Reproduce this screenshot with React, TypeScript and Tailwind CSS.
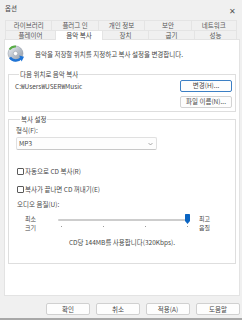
import React from "react";

// 옵션 > 음악 복사 탭

const row1 = ["라이브러리", "플러그 인", "개인 정보", "보안", "네트워크"];
const row2 = [
  { label: "플레이어", w: "w-[50px]" },
  { label: "음악 복사", w: "w-[47px]", active: true },
  { label: "장치", w: "w-[46px]" },
  { label: "굽기", w: "w-[46px]" },
  { label: "성능", w: "w-[43px]" },
];

function RipIcon() {
  return (
    <svg width="18" height="18" viewBox="0 0 18 18">
      <defs>
        <linearGradient id="disc" x1="0" y1="0" x2="1" y2="1">
          <stop offset="0" stopColor="#eef1f5" />
          <stop offset="0.5" stopColor="#b9c1cb" />
          <stop offset="1" stopColor="#8e98a4" />
        </linearGradient>
      </defs>
      <circle cx="8.5" cy="8.5" r="7.5" fill="url(#disc)" stroke="#8a939e" strokeWidth="0.5" />
      <circle cx="8.5" cy="8.5" r="2.2" fill="#fff" stroke="#8a939e" strokeWidth="0.5" />
      <path d="M2.5 4.5 A7 7 0 0 1 9 1.6" fill="none" stroke="#58ad46" strokeWidth="2" />
      <path d="M3 12.5 A7 7 0 0 0 14.2 13" fill="none" stroke="#1f74d6" strokeWidth="2.4" />
      <path d="M12.2 10.6 L17 11.8 L14.6 16.4 Z" fill="#1f74d6" />
    </svg>
  );
}

function Button({ label, primary }: { label: string; primary?: boolean }) {
  return (
    <div
      className={`w-[52px] h-[12px] flex items-center justify-center rounded-[2px] bg-[#fdfdfd] border ${
        primary ? "border-[#3c7fc4]" : "border-[#d3d3d3]"
      }`}
    >
      {label}
    </div>
  );
}

function Check({ label }: { label: string }) {
  return (
    <div className="flex items-center gap-[1px] h-[8px]">
      <div className="w-[7px] h-[7px] border border-[#5a5a5a] rounded-[1px] bg-white" />
      <span>{label}</span>
    </div>
  );
}

export default function App() {
  return (
    <div className="w-[242px] h-[320px] bg-[#f0f0f0] text-[#474747] text-[6.5px] leading-[7px] font-['Noto_Sans_CJK_KR',sans-serif] flex flex-col overflow-hidden border-b-2 border-[#a8a8a8]">
      {/* 제목 표시줄 */}
      <div className="h-[18px] flex items-start justify-between pl-[5px] pr-[6px]">
        <span className="mt-[5px]">옵션</span>
        <span className="mt-[7px] text-[8px] text-[#555]">✕</span>
      </div>

      {/* 탭 */}
      <div className="ml-[5px] w-[232px] mt-[2px] text-[#555]">
        <div className="grid grid-cols-5 h-[10px]">
          {row1.map((t) => (
            <div key={t} className="flex items-center justify-center border-t border-l last:border-r border-[#e4e4e4]">
              {t}
            </div>
          ))}
        </div>
        <div className="flex h-[9px]">
          {row2.map((t) => (
            <div
              key={t.label}
              className={`${t.w} flex items-center justify-center border-t border-l last:border-r border-[#e4e4e4] ${
                t.active ? "bg-white h-[10px] relative z-10 text-[#3a3a3a]" : ""
              }`}
            >
              {t.label}
            </div>
          ))}
        </div>
      </div>

      {/* 탭 내용 */}
      <div className="ml-[4px] w-[236px] h-[257px] bg-white border border-[#e3e3e3] flex flex-col">
        <div className="flex items-center gap-[10px] pl-[2px] mt-[5px] h-[18px]">
          <RipIcon />
          <span>음악을 저장할 위치를 지정하고 복사 설정을 변경합니다.</span>
        </div>

        <fieldset className="mx-[3px] mt-[8px] h-[41px] border border-[#dedede] pl-[6px] pr-[3px]">
          <legend className="ml-[4px] px-[1px] leading-[7px]">다음 위치로 음악 복사</legend>
          <div className="flex justify-between pt-[1.5px]">
            <span className="mt-[3px]">C:₩Users₩USER₩Music</span>
            <div className="flex flex-col gap-[4px]">
              <Button label="변경(H)..." primary />
              <Button label="파일 이름(N)..." />
            </div>
          </div>
        </fieldset>

        <fieldset className="mx-[3px] mt-[3.5px] h-[148.5px] border border-[#dedede] pl-[7px] pr-[3px]">
          <legend className="ml-[4px] px-[1px] leading-[7px]">복사 설정</legend>
          <div className="flex flex-col">
            <span className="mt-[4px]">형식(F):</span>
            <div className="mt-[3.5px] w-[141px] h-[13px] border border-[#e0e0e0] border-b-[#c8c8c8] rounded-[2px] bg-[#fdfdfd] flex items-center justify-between pl-[2px] pr-[3px]">
              <span>MP3</span>
              <svg width="5" height="4" viewBox="0 0 5 4">
                <path d="M0.5 1 L2.5 3 L4.5 1" fill="none" stroke="#777" strokeWidth="0.6" />
              </svg>
            </div>
            <div className="mt-[17px] ml-[1px]">
              <Check label="자동으로 CD 복사(R)" />
            </div>
            <div className="mt-[10px] ml-[1px]">
              <Check label="복사가 끝나면 CD 꺼내기(E)" />
            </div>
            <span className="mt-[7.5px] ml-[1px]">오디오 음질(U):</span>

            <div className="mt-[6px] flex items-start">
              <div className="ml-[9px] w-[33px] flex flex-col text-[6px] leading-[9px]">
                <span>최소</span>
                <span>크기</span>
              </div>
              <div className="relative w-[132px] h-[14px]">
                <div className="mt-[5px] h-[2px] w-[130px] bg-[#cdcdcd] rounded-full" />
                <div className="mt-[5.5px] flex justify-between pl-[3px] pr-[2px]">
                  <div className="w-[1px] h-[1px] bg-[#9a9a9a]" />
                  <div className="w-[1px] h-[1px] bg-[#9a9a9a]" />
                  <div className="w-[1px] h-[1px] bg-[#9a9a9a]" />
                  <div className="w-[1px] h-[1px] bg-[#9a9a9a]" />
                </div>
                <svg className="absolute left-[127px] top-[0.5px]" width="5" height="10" viewBox="0 0 5 10">
                  <path d="M0.6 0 H4.4 Q5 0 5 0.6 V7 L2.5 10 L0 7 V0.6 Q0 0 0.6 0 Z" fill="#0a64c2" />
                </svg>
              </div>
              <div className="ml-[9px] flex flex-col text-[6px] leading-[9px]">
                <span>최고</span>
                <span>음질</span>
              </div>
            </div>

            <span className="mt-[7.5px] text-center pr-[4px]">CD당 144MB를 사용합니다(320Kbps).</span>
          </div>
        </fieldset>
      </div>

      {/* 하단 버튼 */}
      <div className="mt-[7px] flex justify-end gap-[6px] pr-[2px]">
        {["확인", "취소", "적용(A)", "도움말"].map((b) => (
          <div
            key={b}
            className="w-[44px] h-[12px] flex items-center justify-center bg-[#fdfdfd] border border-[#d0d0d0] rounded-[2px]"
          >
            {b}
          </div>
        ))}
      </div>
    </div>
  );
}
